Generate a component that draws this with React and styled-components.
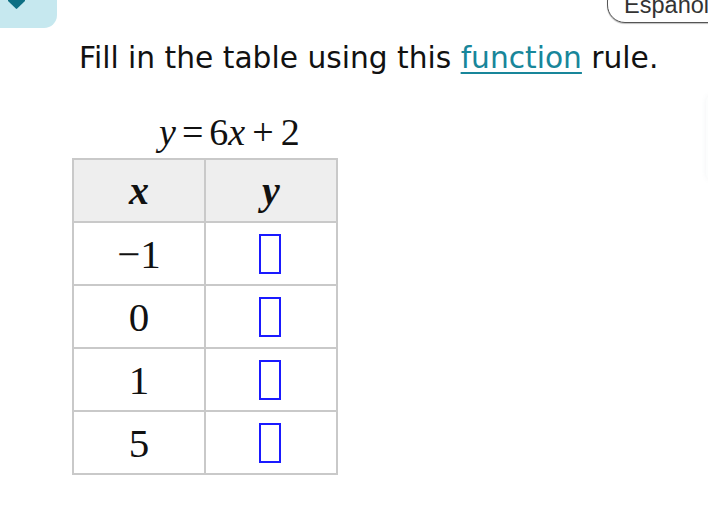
import React from "react";
import styled, { createGlobalStyle } from "styled-components";

const Global = createGlobalStyle`
  html, body { margin: 0; padding: 0; background: #ffffff; }
  body { width: 708px; height: 532px; overflow: hidden; }
`;

const Page = styled.div`
  position: relative;
  width: 708px;
  height: 532px;
  overflow: hidden;
  background: #fff;
  font-family: "DejaVu Sans", Verdana, sans-serif;
`;

const TopBar = styled.div`
  display: flex;
  justify-content: space-between;
  align-items: flex-start;
  height: 28px;
`;

const Tab = styled.div`
  width: 57px;
  height: 28px;
  background: #c6e8ef;
  border-bottom-right-radius: 13px;
  display: flex;
  padding-left: 8px;
  box-sizing: border-box;
`;

const LangButton = styled.div`
  flex: none;
  margin-top: -17px;
  margin-right: -24px;
  height: 40px;
  box-sizing: border-box;
  padding: 4px 22px 0 16px;
  border: 1.5px solid #555;
  border-radius: 18px;
  display: flex;
  align-items: center;
  font-family: "Liberation Sans", Arial, sans-serif;
  font-size: 23.5px;
  color: #333;
  background: #fff;
  box-shadow: 0 1px 1px rgba(0,0,0,0.25);
  white-space: nowrap;
`;

const Prompt = styled.p`
  margin: 13px 0 0 79px;
  font-size: 29.7px;
  line-height: 34px;
  color: #111;
  white-space: nowrap;
`;

const Term = styled.span`
  color: #18869a;
  text-decoration: underline;
  text-underline-offset: 4px;
  text-decoration-thickness: 2px;
`;

const Equation = styled.div`
  margin: 37px 0 0 159px;
  font-family: "Liberation Serif", "Times New Roman", serif;
  font-size: 38px;
  color: #111;
  line-height: 40px;
  height: 40px;
  white-space: nowrap;
`;

const Var = styled.i``;

const Op = styled.span`
  margin: 0 ${(p) => p.$gap || 2}px;
`;

const Table = styled.table`
  margin: 6px 0 0 72px;
  border-collapse: collapse;
  border: 2px solid #c9c9c9;
  font-family: "Liberation Serif", "Times New Roman", serif;
`;

const HeadCell = styled.th`
  width: 130px;
  height: 61px;
  background: #eeeeee;
  border: 2px solid #c9c9c9;
  font-size: 40px;
  font-style: italic;
  font-weight: bold;
  color: #111;
  text-align: center;
  padding: 0;
  line-height: 40px;
`;

const Cell = styled.td`
  width: 130px;
  height: 61px;
  border: 2px solid #c9c9c9;
  font-size: 41px;
  line-height: 44px;
  color: #111;
  text-align: center;
  vertical-align: middle;
  padding: 0;
`;

const AnswerBox = styled.div`
  width: 18px;
  height: 36px;
  border: 2px solid #1a1aff;
  margin: 0 auto 0 53px;
`;

const EdgePanel = styled.div`
  position: absolute;
  right: -10px;
  top: 95px;
  width: 12px;
  height: 85px;
  border-radius: 6px;
  background: #fcfdfd;
  box-shadow: 0 0 5px rgba(120, 140, 150, 0.1);
`;

const rows = [
  { x: "\u22121" },
  { x: "0" },
  { x: "1" },
  { x: "5" },
];

export default function App() {
  return (
    <Page>
      <Global />
      <TopBar>
        <Tab>
          <svg width="18" height="10" viewBox="0 0 18 10">
            <path d="M0 0 H17 V1 L9.2 8.6 Q8.5 9.2 7.8 8.6 L0 1 Z" fill="#0d6f83" />
          </svg>
        </Tab>
        <LangButton>Español</LangButton>
      </TopBar>
      <Prompt>
        Fill in the table using this <Term>function</Term> rule.
      </Prompt>
      <Equation>
        <Var>y</Var>
        <Op $gap={6}>=</Op>6<Var>x</Var>
        <Op $gap={7}>+</Op>2
      </Equation>
      <Table>
        <thead>
          <tr>
            <HeadCell>x</HeadCell>
            <HeadCell>y</HeadCell>
          </tr>
        </thead>
        <tbody>
          {rows.map((r) => (
            <tr key={r.x}>
              <Cell>{r.x}</Cell>
              <Cell>
                <AnswerBox />
              </Cell>
            </tr>
          ))}
        </tbody>
      </Table>
      <EdgePanel />
    </Page>
  );
}
